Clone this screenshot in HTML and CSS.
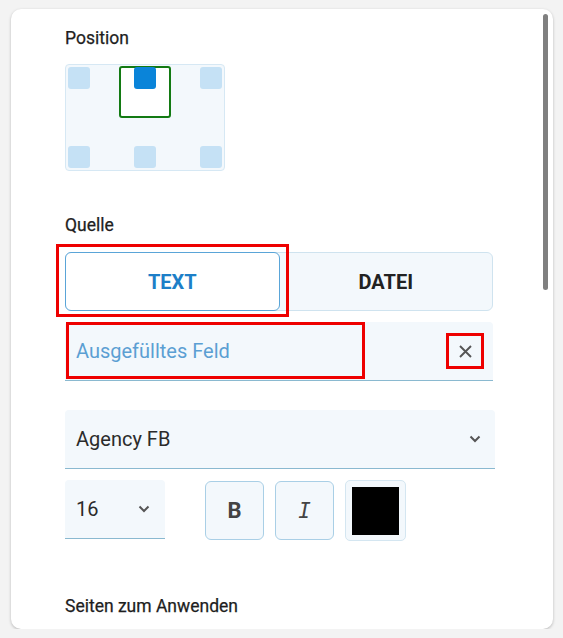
FILE: index.html
```html
<!DOCTYPE HTML>
<html>

<head>
    <meta charset="utf-8">

    <link rel="stylesheet" href="styles.css">

</head>

<body>

<div class="panel">
    <div class="scroll-thumb"></div>

    <div class="panel-body">

        <div class="label">Position</div>

        <div class="pos-grid">
            <div class="pos-row">
                <span class="cell"></span>
                <span class="cell active"></span>
                <span class="cell"></span>
            </div>
            <div class="pos-row">
                <span class="cell"></span>
                <span class="cell"></span>
                <span class="cell"></span>
            </div>
            <div class="pos-frame"></div>
        </div>

        <div class="label quelle">Quelle</div>

        <div class="toggle">
            <button class="toggle-btn selected">TEXT<span class="mark mark-toggle"></span></button>
            <button class="toggle-btn">DATEI</button>
        </div>

        <div class="field">
            <span class="field-value">Ausgefülltes Feld</span>
            <span class="mark mark-field"></span>
            <span class="clear">
                <svg width="13" height="13" viewBox="0 0 13 13">
                    <path d="M1 1 L12 12 M12 1 L1 12" stroke="#555" stroke-width="1.9" fill="none"/>
                </svg>
                <span class="mark mark-clear"></span>
            </span>
        </div>

        <div class="select font-select">
            <span>Agency FB</span>
            <svg class="chevron" width="12" height="8" viewBox="0 0 12 8">
                <path d="M1.5 1.5 L6 6 L10.5 1.5" stroke="#555" stroke-width="2" fill="none"/>
            </svg>
        </div>

        <div class="format-row">
            <div class="select size-select">
                <span>16</span>
                <svg class="chevron" width="12" height="8" viewBox="0 0 12 8">
                    <path d="M1.5 1.5 L6 6 L10.5 1.5" stroke="#555" stroke-width="2" fill="none"/>
                </svg>
            </div>
            <button class="fmt-btn bold">B</button>
            <button class="fmt-btn italic">I</button>
            <div class="color-btn"><span class="swatch"></span></div>
        </div>

        <div class="label pages">Seiten zum Anwenden</div>

    </div>
</div>

</body>

</html>
```

FILE: styles.css
```css
/* панель настроек текста */

body {
    margin: 0;
    background-color: #f3f3f3;
    font-family: Roboto, "Liberation Sans", sans-serif;
    color: #2b2b2b;
}

.panel {
    position: relative;
    margin: 9px 10px 0 11px;
    height: 620px;
    background-color: #fff;
    border-radius: 10px;
    box-shadow: 0 1px 3px rgba(0, 0, 0, 0.25);
    overflow: hidden;
}

.scroll-thumb {
    position: absolute;
    left: 532px;
    top: 5px;
    width: 5px;
    height: 276px;
    border-radius: 3px;
    background-color: #808080;
}

.panel-body {
    padding: 19px 0 0 54px;
    width: 430px;
}

.label {
    font-size: 17.5px;
    font-weight: 400;
    line-height: 20px;
    margin-bottom: 16px;
    color: #1e1e1e;
    -webkit-text-stroke: 0.25px #1e1e1e;
}

.quelle {
    margin-top: 44px;
    margin-bottom: 17px;
}

.pages {
    margin-top: 55px;
}

/* сетка выбора позиции */

.pos-grid {
    position: relative;
    width: 160px;
    height: 107px;
    box-sizing: border-box;
    padding: 2px;
    border: 1px solid #d6e8f4;
    border-radius: 4px;
    background-color: #f3f8fc;
    display: flex;
    flex-direction: column;
    justify-content: space-between;
}

.pos-row {
    display: flex;
    justify-content: space-between;
}

.cell {
    position: relative;
    z-index: 1;
    width: 22px;
    height: 22px;
    border-radius: 3px;
    background-color: #c5e1f5;
}

.cell.active {
    background-color: #0a84d9;
}

.pos-frame {
    position: absolute;
    left: 53px;
    top: 1px;
    width: 48px;
    height: 48px;
    border: 2px solid #137a13;
    border-radius: 3px;
    background-color: #fff;
}

/* переключатель источника */

.toggle {
    display: flex;
    width: 428px;
    height: 59px;
    box-sizing: border-box;
    border: 1px solid #cfe3ef;
    border-radius: 6px;
    background-color: #f3f8fc;
}

.toggle-btn {
    position: relative;
    flex: 1;
    border: none;
    background: none;
    font-family: inherit;
    font-size: 20px;
    font-weight: bold;
    color: #222;
    padding: 0;
}

.toggle-btn.selected {
    margin: -1px 0 -1px -1px;
    border: 1px solid #5aa5d8;
    border-radius: 6px;
    background-color: #fff;
    color: #1d7fc8;
}

.mark {
    position: absolute;
    border: 3px solid #ee0000;
    pointer-events: none;
}

.mark-toggle {
    left: -10px;
    top: -9px;
    right: -10px;
    bottom: -7px;
}

.mark-field {
    left: 1px;
    top: 0;
    width: 293px;
    height: 51px;
}

.mark-clear {
    left: -13px;
    top: -12px;
    width: 32px;
    height: 30px;
}

/* поля ввода */

.field {
    position: relative;
    margin-top: 11px;
    width: 428px;
    height: 59px;
    box-sizing: border-box;
    padding: 0 21px 0 11px;
    display: flex;
    align-items: center;
    justify-content: space-between;
    background-color: #f3f8fc;
    border-bottom: 1px solid #8ab9d0;
    border-radius: 4px 4px 0 0;
    font-size: 20px;
}

.field-value {
    color: #5b9fd3;
}

.clear {
    position: relative;
    display: flex;
}

.select {
    height: 59px;
    box-sizing: border-box;
    padding: 0 14px 0 11px;
    display: flex;
    align-items: center;
    justify-content: space-between;
    background-color: #f3f8fc;
    border-bottom: 1px solid #8ab9d0;
    border-radius: 4px 4px 0 0;
    font-size: 20px;
    color: #2b2b2b;
}

.font-select {
    margin-top: 29px;
    width: 430px;
}

.format-row {
    margin-top: 11px;
    display: flex;
    align-items: flex-start;
}

.size-select {
    width: 100px;
    padding-right: 15px;
}

.fmt-btn {
    margin-top: 1px;
    width: 59px;
    height: 59px;
    box-sizing: border-box;
    border: 1px solid #a9cfe6;
    border-radius: 6px;
    background-color: #f3f8fc;
    color: #444;
    padding: 0;
    font-size: 22px;
}

.fmt-btn.bold {
    margin-left: 40px;
    font-family: Roboto, sans-serif;
    font-weight: bold;
}

.fmt-btn.italic {
    margin-left: 11px;
    font-family: "DejaVu Sans Mono", monospace;
    font-style: italic;
    font-size: 21px;
}

.color-btn {
    margin-left: 11px;
    width: 61px;
    height: 61px;
    box-sizing: border-box;
    padding: 6px;
    border: 1px solid #d4e6f1;
    border-radius: 5px;
    background-color: #f3f8fc;
}

.swatch {
    display: block;
    width: 47px;
    height: 48px;
    background-color: #000;
}
```
